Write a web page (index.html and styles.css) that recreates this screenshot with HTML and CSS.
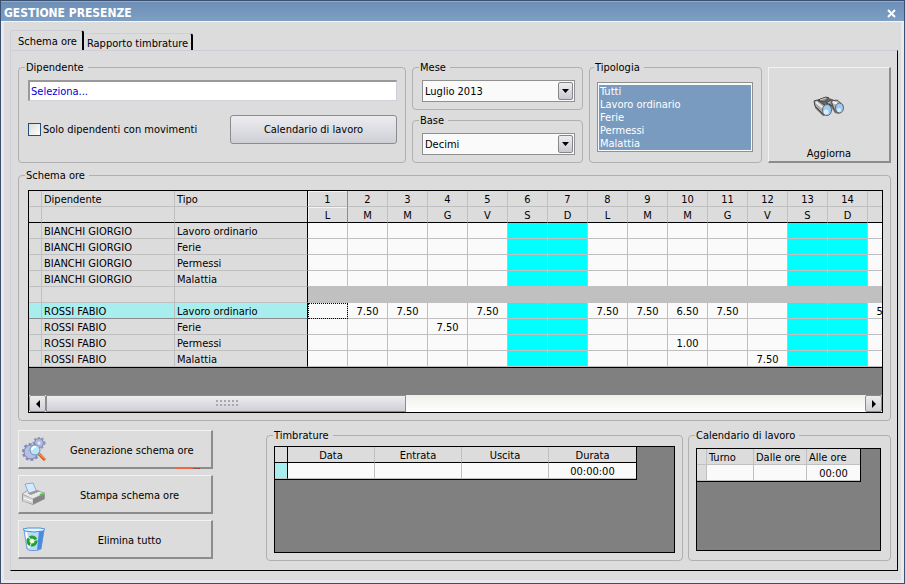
FILE: index.html
```
<!DOCTYPE html>
<html lang="it">
<head>
  <meta charset="UTF-8" />
  <meta name="viewport" content="width=device-width, initial-scale=1" />
  <title>Gestione presenze</title>
  <link rel="stylesheet" href="styles.css">
</head>
<body>
  <div class="window">
    <header class="titlebar">
      <h1>GESTIONE PRESENZE</h1>
      <button class="close" aria-label="Chiudi">
        <svg width="9" height="9" viewBox="0 0 9 9"><path d="M1 1l7 7M8 1l-7 7" stroke="#fff" stroke-width="2"/></svg>
      </button>
    </header>

    <main class="content">
      <nav class="tabs">
        <button class="tab active">Schema ore</button>
        <button class="tab">Rapporto timbrature</button>
      </nav>

      <div class="page">
        <section class="filters">
          <fieldset class="dipendente">
            <legend>Dipendente</legend>
            <input type="text" class="search" value="Seleziona..." aria-label="Dipendente" />
            <div class="options">
              <label class="check"><input type="checkbox" />Solo dipendenti con movimenti</label>
              <button class="btn">Calendario di lavoro</button>
            </div>
          </fieldset>

          <div class="periodo">
            <fieldset>
              <legend>Mese</legend>
              <div class="combo">
                <select aria-label="Mese"><option>Luglio 2013</option></select>
                <span class="arrow"><svg width="7" height="4" viewBox="0 0 7 4"><path d="M0 0h7L3.500 4z"/></svg></span>
              </div>
            </fieldset>
            <fieldset>
              <legend>Base</legend>
              <div class="combo">
                <select aria-label="Base"><option>Decimi</option></select>
                <span class="arrow"><svg width="7" height="4" viewBox="0 0 7 4"><path d="M0 0h7L3.500 4z"/></svg></span>
              </div>
            </fieldset>
          </div>

          <fieldset class="tipologia">
            <legend>Tipologia</legend>
            <select class="list" multiple size="5" aria-label="Tipologia">
              <option selected>Tutti</option>
              <option selected>Lavoro ordinario</option>
              <option selected>Ferie</option>
              <option selected>Permessi</option>
              <option selected>Malattia</option>
            </select>
          </fieldset>

          <button class="tool refresh">
            <svg width="32" height="22" viewBox="0 0 32 22">
              <path d="M1 5L12 1l4 1 8 3 6 5-4 8-4-1-4-6-3 8-5 1-8-8z" fill="#6b6b6b"/>
              <path d="M1 5l3-1 9 6-3 8-8-8z" fill="#aaa" stroke="#444"/>
              <path d="M3 6l7 6" stroke="#eee" stroke-width="2"/>
              <path d="M5 4l8-3 3 1-5 4zM13 7l5-3 6 1-4 5z" fill="#888" stroke="#444"/>
              <path d="M7 4l6-2M15 7l4-2" stroke="#ccc"/>
              <path d="M18 5l6-1 6 5-4 7-4-1z" fill="#b5b5b5" stroke="#555"/>
              <path d="M20 6l5 2" stroke="#f4f4f4" stroke-width="2"/>
              <ellipse cx="14" cy="14" rx="4.500" ry="5.500" fill="#9ccbf5" stroke="#666"/>
              <ellipse cx="26.500" cy="12" rx="4" ry="5" fill="#9ccbf5" stroke="#666"/>
              <ellipse cx="13" cy="16" rx="2.500" ry="2.500" fill="#d8eeff"/>
              <ellipse cx="26" cy="14" rx="2" ry="2" fill="#d8eeff"/>
            </svg>
            <span>Aggiorna</span>
          </button>
        </section>

        <fieldset class="schema">
          <legend>Schema ore</legend>
          <div class="grid">
            <div class="scroll">
              <table class="ore">
                <colgroup>
                  <col class="c-sel"><col class="c-name"><col class="c-name">
                  <col span="15" class="c-day">
                </colgroup>
                <thead>
                  <tr><th></th><th>Dipendente</th><th>Tipo</th><th class="cur">1</th><th>2</th><th>3</th><th>4</th><th>5</th><th>6</th><th>7</th><th>8</th><th>9</th><th>10</th><th>11</th><th>12</th><th>13</th><th>14</th><th></th></tr>
                  <tr><th></th><th></th><th></th><th class="cur">L</th><th>M</th><th>M</th><th>G</th><th>V</th><th>S</th><th>D</th><th>L</th><th>M</th><th>M</th><th>G</th><th>V</th><th>S</th><th>D</th><th></th></tr>
                </thead>
                <tbody>
                  <tr><td></td><td>BIANCHI GIORGIO</td><td>Lavoro ordinario</td><td></td><td></td><td></td><td></td><td></td><td></td><td></td><td></td><td></td><td></td><td></td><td></td><td></td><td></td><td></td></tr>
                  <tr><td></td><td>BIANCHI GIORGIO</td><td>Ferie</td><td></td><td></td><td></td><td></td><td></td><td></td><td></td><td></td><td></td><td></td><td></td><td></td><td></td><td></td><td></td></tr>
                  <tr><td></td><td>BIANCHI GIORGIO</td><td>Permessi</td><td></td><td></td><td></td><td></td><td></td><td></td><td></td><td></td><td></td><td></td><td></td><td></td><td></td><td></td><td></td></tr>
                  <tr><td></td><td>BIANCHI GIORGIO</td><td>Malattia</td><td></td><td></td><td></td><td></td><td></td><td></td><td></td><td></td><td></td><td></td><td></td><td></td><td></td><td></td><td></td></tr>
                  <tr class="sep"><td></td><td></td><td></td><td></td><td></td><td></td><td></td><td></td><td></td><td></td><td></td><td></td><td></td><td></td><td></td><td></td><td></td><td></td></tr>
                  <tr class="selected"><td></td><td>ROSSI FABIO</td><td>Lavoro ordinario</td><td class="focus"></td><td>7.50</td><td>7.50</td><td></td><td>7.50</td><td></td><td></td><td>7.50</td><td>7.50</td><td>6.50</td><td>7.50</td><td></td><td></td><td></td><td>5.50</td></tr>
                  <tr><td></td><td>ROSSI FABIO</td><td>Ferie</td><td></td><td></td><td></td><td>7.50</td><td></td><td></td><td></td><td></td><td></td><td></td><td></td><td></td><td></td><td></td><td></td></tr>
                  <tr><td></td><td>ROSSI FABIO</td><td>Permessi</td><td></td><td></td><td></td><td></td><td></td><td></td><td></td><td></td><td></td><td>1.00</td><td></td><td></td><td></td><td></td><td></td></tr>
                  <tr><td></td><td>ROSSI FABIO</td><td>Malattia</td><td></td><td></td><td></td><td></td><td></td><td></td><td></td><td></td><td></td><td></td><td></td><td>7.50</td><td></td><td></td><td></td></tr>
                </tbody>
              </table>
            </div>
            <div class="scrollbar">
              <button aria-label="Scorri a sinistra"><svg width="4" height="8" viewBox="0 0 4 8"><path d="M4 0v8L0 4z"/></svg></button>
              <div class="track"><div class="thumb"><span class="grip"></span></div></div>
              <button aria-label="Scorri a destra"><svg width="4" height="8" viewBox="0 0 4 8"><path d="M0 0v8l4-4z"/></svg></button>
            </div>
          </div>
        </fieldset>

        <section class="bottom">
          <div class="actions">
            <button class="tool action genera">
              <svg width="24" height="24" viewBox="0 0 24 24">
                <circle cx="17" cy="6" r="4.500" fill="#b3b9dc" stroke="#7880b4"/>
                <circle cx="17" cy="6" r="5.500" fill="none" stroke="#8e96c4" stroke-width="2" stroke-dasharray="2 2"/>
                <circle cx="17" cy="6" r="1.500" fill="#eee"/>
                <circle cx="9" cy="15" r="7" fill="#b8bee0" stroke="#7880b4"/>
                <circle cx="9" cy="15" r="8" fill="none" stroke="#8089bd" stroke-width="2" stroke-dasharray="3 2"/>
                <path d="M17 17l6 6" stroke="#d9541c" stroke-width="3"/>
                <path d="M17 17l6 5" stroke="#ffb060"/>
                <circle cx="13" cy="13" r="5" fill="#b5e6fa" stroke="#6f93b5"/>
                <path d="M10 13a3 3 0 0 1 4-3" fill="none" stroke="#fff" stroke-width="2"/>
              </svg>
              <span>Generazione schema ore</span>
            </button>
            <button class="tool action">
              <svg width="24" height="24" viewBox="0 0 24 24">
                <path d="M0 12l7-5 16 4v6l-12 6-11-4z" fill="#9b9b9b"/>
                <path d="M0 12l8-5 15 4-12 6z" fill="#e8e8e8" stroke="#aaa"/>
                <path d="M1 13l10 4v5L1 19z" fill="#d5d5d5"/>
                <path d="M11 17l11-5v5l-11 5z" fill="#858585"/>
                <path d="M2 16l8 3" stroke="#fff"/>
                <path d="M3 2l8-1 4 9-8 2z" fill="#d5eaff" stroke="#88acd5"/>
                <path d="M6 11l9-3 3 1-9 4z" fill="#999"/>
                <path d="M18 13l3-1" stroke="#49c840" stroke-width="2"/>
              </svg>
              <span>Stampa schema ore</span>
            </button>
            <button class="tool action">
              <svg width="24" height="24" viewBox="0 0 24 24">
                <path d="M2 3h20l-3 19-4 1.500H8L5 22z" fill="#b9dafb" stroke="#6e9fdd"/>
                <path d="M17 4h5l-3 18-4 1z" fill="#4a8be0"/>
                <path d="M4 5l3 16" stroke="#fff" stroke-width="2"/>
                <path d="M1 2l5-1h12l5 1-2 2-9 1-9-1z" fill="#e9f5ff" stroke="#4c91dc"/>
                <circle cx="10" cy="14" r="4" fill="#e0f5dc" stroke="#21a32b" stroke-width="3" stroke-dasharray="7 1"/>
                <path d="M10 12l2 3H8z" fill="#fff"/>
              </svg>
              <span>Elimina tutto</span>
            </button>
          </div>

          <fieldset class="timbrature">
            <legend>Timbrature</legend>
            <div class="grid">
              <table>
                <colgroup><col class="c-sel"><col span="4" class="c-time"></colgroup>
                <thead>
                  <tr><th></th><th>Data</th><th>Entrata</th><th>Uscita</th><th>Durata</th></tr>
                </thead>
                <tbody>
                  <tr><td></td><td></td><td></td><td></td><td>00:00:00</td></tr>
                </tbody>
              </table>
            </div>
          </fieldset>

          <fieldset class="calendario">
            <legend>Calendario di lavoro</legend>
            <div class="grid">
              <table>
                <colgroup><col class="c-mark"><col class="c-turno"><col class="c-hour"><col class="c-hour"></colgroup>
                <thead>
                  <tr><th></th><th>Turno</th><th>Dalle ore</th><th>Alle ore</th></tr>
                </thead>
                <tbody>
                  <tr><td></td><td></td><td></td><td>00:00</td></tr>
                </tbody>
              </table>
            </div>
          </fieldset>
        </section>
      </div>
    </main>
  </div>
</body>
</html>
```

FILE: styles.css
```
* { box-sizing: border-box; margin: 0; padding: 0; }
body, button, input, select {
  font-family: 'DejaVu Sans Condensed', 'DejaVu Sans', sans-serif;
  font-size: 11px;
  color: #000;
}
body { background: #dcdcdc; line-height: 14px; }
svg { display: block; flex: none; }

.window {
  min-height: 100vh;
  display: flex; flex-direction: column;
  background: #dcdcdc;
  border: 1px solid #3a506e;
}
.titlebar {
  height: 21px;
  display: flex; align-items: center; justify-content: space-between;
  padding: 3px 8px 0 3px;
  background: linear-gradient(#6d8fb7, #7d9fc4);
  border-top: 1px solid #8fabc9;
  border-bottom: 1px solid #f4f6f8;
}
.titlebar h1 { font-size: 12px; font-weight: bold; color: #fff; }
.close { border: none; background: none; }

.content {
  flex: 1;
  display: flex; flex-direction: column;
  padding: 8px 3px 9px 6px;
  border: 3px solid #e9eaee;
  border-top: none;
}
.tabs { display: flex; align-items: flex-end; height: 20px; }
.tab {
  height: 17px;
  padding: 2px 3px 0;
  background: #dcdcdc;
  border: 1px solid #cfcfd8;
  border-left: none; border-bottom: none;
  border-right: 2px solid #000;
  border-radius: 3px 3px 0 0;
}
.tab.active {
  height: 21px;
  margin-bottom: -1px;
  padding: 1px 5px 0 7px;
  border-left: 1px solid #cfcfd8;
}
.page {
  flex: 1;
  display: flex; flex-direction: column;
  padding: 9px 6px 9px 7px;
  border: 1px solid #cfcfd8;
  border-right-color: #000;
  border-bottom-color: #000;
}

fieldset {
  min-width: 0;
  border: 1px solid #b0b0b0;
  border-radius: 4px;
  padding: 6px 7px 7px 9px;
}
legend { margin-left: -3px; padding: 2px 4px 0 1px; line-height: 12px; }

/* filtri */
.filters {
  display: grid;
  grid-template-columns: 1fr 171px 173px 123px;
  gap: 6px;
}
.dipendente { padding-right: 8px; }
.periodo { display: flex; flex-direction: column; gap: 3px; }
.search {
  display: block;
  width: 100%; height: 21px;
  padding: 0 1px;
  color: #0000e0;
  background: #fff;
  border: 1px solid #d0d0d8;
  border-top: 2px solid #999; border-left: 2px solid #999;
}
.options { display: flex; align-items: center; justify-content: space-between; margin-top: 14px; }
.check { display: flex; align-items: center; gap: 2px; }
.check input {
  appearance: none;
  width: 13px; height: 13px;
  border: 1px solid #1c5180;
  background: linear-gradient(135deg, #dcdcd7, #fff);
}
.btn {
  width: 167px; height: 29px;
  background: linear-gradient(#ececf0, #cfd0d6);
  border: 1px solid #8c8c90;
  border-radius: 3px;
}
.combo { position: relative; }
.combo select {
  appearance: none;
  display: block;
  width: 100%; height: 22px;
  padding: 0 20px 0 2px;
  background: #fafafa;
  border: 1px solid #909090;
  border-radius: 0;
}
.arrow {
  position: absolute; top: 2px; right: 2px;
  width: 15px; height: 18px;
  display: flex; align-items: center; justify-content: center;
  background: linear-gradient(#ededf0, #c9cad2);
  border: 1px solid #85858a; border-radius: 2px;
  pointer-events: none;
}
.tipologia { padding: 8px 8px 7px 7px; }
.list {
  display: block;
  width: 100%; height: 70px;
  padding: 2px 1px 1px;
  background: #fafafa;
  border: 1px solid #909090;
  border-radius: 0;
  overflow: hidden;
}
.list option {
  height: 13px; min-height: 13px;
  padding: 0 1px;
  line-height: 13px;
}
.list option:checked {
  color: #fff;
  background: #7a9bc0 linear-gradient(#7a9bc0, #7a9bc0);
}

.tool {
  background: #dcdcdc;
  border: 1px solid #f2f2f2;
  border-right: 2px solid #8c8c90; border-bottom: 2px solid #8c8c90;
}
.refresh {
  display: flex; flex-direction: column; align-items: center; justify-content: space-between;
  margin-top: 7px;
  padding: 28px 0 1px;
}

/* griglie */
.grid {
  flex: 1; min-width: 0;
  display: flex; flex-direction: column;
  background: #808080;
  border: 1px solid #000;
}
table { border-collapse: separate; border-spacing: 0; table-layout: fixed; width: 1px; }
th, td {
  height: 16px;
  padding-top: 2px;
  line-height: 13px;
  font-weight: normal;
  text-align: center;
  white-space: nowrap;
  border-right: 1px solid #c0c0c0;
  border-bottom: 1px solid #c0c0c0;
}
th { background: #dcdcdc; }
td { background: #fafafa; }
td:first-child { background: #dcdcdc; }
.c-sel { width: 13px; }
.c-name { width: 133px; }
.c-day { width: 40px; }
.c-time { width: 87px; }
.c-mark { width: 10px; }
.c-turno { width: 47px; }
.c-hour { width: 53px; }

.schema {
  flex: 1;
  display: flex;
  margin-top: 5px;
  padding-top: 8px;
}
.scroll { flex: 1; min-height: 204px; overflow: hidden; }
.ore { border-bottom: 1px solid #000; }
.ore tr > :nth-child(-n+3) { background: #dcdcdc; text-align: left; padding-left: 2px; }
.ore tr > :nth-child(3) { border-right-color: #000; }
.ore thead tr:last-child th { border-bottom-color: #000; }
.ore .cur { border-right-color: #8c8c90; box-shadow: inset 1px 1px #f4f4f4; }
.ore td:nth-child(7n+9), .ore td:nth-child(7n+10) { background: #00ffff; }
.ore .sep td:nth-child(n+4) { background: #c0c0c0; }
.ore .selected td:nth-child(-n+3) { background: #a9eeee; border-bottom-color: #8c8c90; }
.ore .focus { outline: 1px dotted #000; outline-offset: -1px; }

.scrollbar { display: flex; height: 17px; background: linear-gradient(#f0f0ea, #fff); }
.scrollbar button {
  width: 17px;
  display: flex; align-items: center; justify-content: center;
  background: linear-gradient(#ededf0, #cfd0d6);
  border: 1px solid #8c8c90; border-radius: 2px;
}
.track { flex: 1; }
.thumb {
  width: 44%; height: 17px;
  display: flex; align-items: center; justify-content: center;
  background: linear-gradient(#ededf0, #cfd0d6);
  border: 1px solid #8c8c90;
}
.grip {
  width: 24px; height: 8px;
  background: conic-gradient(#a8a8ac 25%, transparent 0) 0 0 / 4px 4px;
}

/* parte bassa */
.bottom {
  display: grid;
  grid-template-columns: 243px 1fr 203px;
  gap: 5px;
  margin-top: 7px;
}
.actions { display: flex; flex-direction: column; gap: 6px; padding: 2px 48px 2px 0; }
.action { display: flex; align-items: center; height: 39px; padding: 0 22px 0 3px; }
.action svg { align-self: flex-start; margin-top: 6px; }
.action span { flex: 1; padding: 2px 0 0 24px; white-space: nowrap; }
.genera { position: relative; }
.genera::after {
  content: "";
  position: absolute; top: 100%; right: 11px;
  width: 24px; height: 1px; margin-top: 1px;
  background: linear-gradient(90deg, #f06a40 70%, #666 70%, #666 90%, #d03020 90%);
}
.timbrature, .calendario { display: flex; padding-left: 7px; padding-top: 4px; }
.timbrature legend, .calendario legend { margin-left: -1px; }
.calendario { padding: 6px 9px 9px 7px; }
.timbrature table, .calendario table {
  border-right: 1px solid #000;
  border-bottom: 1px solid #000;
}
.timbrature th { border-bottom-color: #000; }
.timbrature tr > :first-child { border-right-color: #000; }
.timbrature td:first-child { background: #a9eeee; }
.timbrature tr > :last-child, .calendario tr > :last-child { border-right: none; }
.calendario th { text-align: left; padding-left: 2px; }
```
